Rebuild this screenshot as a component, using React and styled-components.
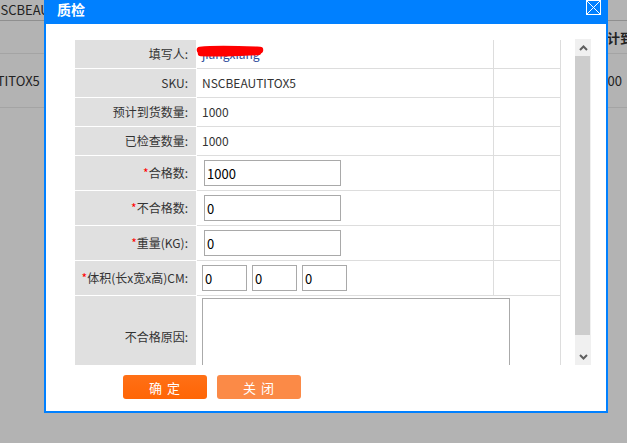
import React from 'react'
import styled, { createGlobalStyle } from 'styled-components'

const GlobalStyle = createGlobalStyle`
  html, body {
    margin: 0;
    padding: 0;
  }
  body {
    background: #b3b3b3;
    font-family: "Noto Sans CJK SC", "Noto Sans", sans-serif;
  }
`

const Page = styled.div`
  position: relative;
  width: 627px;
  height: 443px;
  overflow: hidden;
  background: #b3b3b3;
`

// page behind the dialog
const BgRow = styled.div`
  display: flex;
  justify-content: space-between;
  align-items: ${(p) => p.$align || 'center'};
  height: ${(p) => p.$h}px;
  border-bottom: 1px solid ${(p) => p.$line || '#a4a4a4'};
  font-size: 13px;
  color: #222;
  white-space: nowrap;
`

const BgCell = styled.div`
  margin-left: ${(p) => p.$shift || 0}px;
  font-weight: ${(p) => (p.$bold ? 700 : 400)};
`

const BgRight = styled.div`
  width: ${(p) => p.$w}px;
  overflow: hidden;
  font-weight: ${(p) => (p.$bold ? 700 : 400)};
`

const BgHead = styled.span`
  display: inline-block;
  margin-left: 1px;
`

// dialog
const Modal = styled.div`
  position: absolute;
  left: 44px;
  top: 0;
  width: 564px;
  height: 413px;
  box-sizing: border-box;
  background: #0080ff;
  padding: 0 2px 2px;
  display: flex;
  flex-direction: column;
`

const TitleBar = styled.div`
  height: 24px;
  display: flex;
  justify-content: space-between;
  align-items: flex-start;
  padding: 0 5px 0 11px;
  color: #fff;
`

const Title = styled.div`
  font-size: 14px;
  font-weight: 700;
  line-height: 18px;
`

const CloseBox = styled.div`
  width: 15px;
  height: 15px;
  box-sizing: border-box;
  border: 1px solid #fff;
  display: flex;
`

const Body = styled.div`
  flex: 1;
  background: #fff;
  padding: 15px 0 0 29px;
  display: flex;
  flex-direction: column;
`

const ScrollArea = styled.div`
  display: flex;
  gap: 14px;
  height: 326px;
`

const Viewport = styled.div`
  width: 486px;
  height: 326px;
  overflow: hidden;
  padding-top: 1px;
  box-sizing: border-box;
`

const Row = styled.div`
  display: grid;
  grid-template-columns: ${(p) => (p.$wide ? '122px 364px' : '122px 297px 67px')};
  height: ${(p) => p.$h}px;
`

const Label = styled.div`
  background: #e0e0e0;
  border-right: 1px solid #fff;
  border-bottom: 1px solid #fff;
  display: flex;
  align-items: center;
  justify-content: flex-end;
  padding: 0 8px 2px 0;
  font-size: 12px;
  color: #333;
  white-space: nowrap;
`

const Star = styled.span`
  color: #f00;
`

const Value = styled.div`
  position: relative;
  border-right: 1px solid #ddd;
  border-bottom: 1px solid #ddd;
  display: flex;
  align-items: ${(p) => (p.$top ? 'flex-start' : 'center')};
  gap: 5px;
  padding: 0 0 ${(p) => (p.$text ? 2 : 0)}px 5px;
  font-size: 12px;
  color: ${(p) => p.$color || '#333'};
`

const Spare = styled.div`
  border-right: 1px solid #ddd;
  border-bottom: 1px solid #ddd;
`

const Field = styled.input`
  width: ${(p) => p.$w}px;
  height: 26px;
  box-sizing: border-box;
  margin: 0 0 0 ${(p) => p.$ml || 0}px;
  border: 1px solid #a9a9a9;
  padding: 0 2px;
  font-family: "Noto Sans CJK SC", "Noto Sans", sans-serif;
  font-size: 13px;
  color: #000;
  background: #fff;
  outline: none;
`

const Reason = styled.textarea`
  width: 308px;
  height: 80px;
  box-sizing: border-box;
  margin-top: 2px;
  border: 1px solid #aaa;
  resize: none;
  outline: none;
`

const Scribble = styled.svg`
  position: absolute;
  left: -2px;
  top: 5px;
`

const ScrollBar = styled.div`
  width: 16px;
  height: 326px;
  background: #f0f0f0;
  display: flex;
  flex-direction: column;
`

const ArrowBtn = styled.div`
  height: 17px;
  display: flex;
  align-items: center;
  justify-content: center;
`

const Thumb = styled.div`
  height: 279px;
  width: 15px;
  background: #cdcdcd;
`

const Filler = styled.div`
  flex: 1;
`

const Buttons = styled.div`
  display: flex;
  gap: 10px;
  margin-top: 10px;
  padding-left: 48px;
`

const Btn = styled.button`
  width: 84px;
  height: 24px;
  border: none;
  border-radius: 3px;
  background: ${(p) => (p.$light ? '#fb8a47' : 'linear-gradient(#ff7016, #ff6505)')};
  color: #fff;
  font-family: "Noto Sans CJK SC", sans-serif;
  font-size: 13px;
  letter-spacing: 1px;
  padding: 0;
`

const Chevron = ({ up }) => (
  <svg width="9" height="6" viewBox="0 0 9 6">
    <path
      d={up ? 'M1 5 L4.5 1.5 L8 5' : 'M1 1 L4.5 4.5 L8 1'}
      fill="none"
      stroke="#606060"
      strokeWidth="2"
    />
  </svg>
)

const rows = [
  { label: '填写人:', text: 'jiangxiang', redacted: true },
  { label: 'SKU:', text: 'NSCBEAUTITOX5' },
  { label: '预计到货数量:', text: '1000' },
  { label: '已检查数量:', text: '1000' },
]

const inputs = [
  { label: '合格数:', value: '1000' },
  { label: '不合格数:', value: '0' },
  { label: '重量(KG):', value: '0' },
]

const App = () => {
  return (
    <Page>
      <GlobalStyle />
      <BgRow $h={20} $line="#8f8f8f" $align="flex-start">
        <BgCell $shift={-9}>NSCBEAUTITOX5</BgCell>
      </BgRow>
      <BgRow $h={32}>
        <BgCell />
        <BgRight $w={34} $bold>
          <BgHead>预计到货数量</BgHead>
        </BgRight>
      </BgRow>
      <BgRow $h={53}>
        <BgCell $shift={-62}>NSCBEAUTITOX5</BgCell>
        <BgRight $w={34}>1000</BgRight>
      </BgRow>

      <Modal>
        <TitleBar>
          <Title>质检</Title>
          <CloseBox>
            <svg width="13" height="13" viewBox="0 0 13 13">
              <path d="M0 0 L13 13 M13 0 L0 13" stroke="#fff" strokeWidth="1" />
            </svg>
          </CloseBox>
        </TitleBar>
        <Body>
          <ScrollArea>
            <Viewport>
              {rows.map((r) => (
                <Row key={r.label} $h={29}>
                  <Label>{r.label}</Label>
                  <Value $text $color={r.redacted ? '#2a4a9a' : '#333'}>
                    {r.text}
                    {r.redacted && (
                      <Scribble width="70" height="14" viewBox="0 0 70 14">
                        <path
                          d="M5 5 C22 3, 42 4, 65 5 M6 8 C24 9, 44 8, 63 7"
                          fill="none"
                          stroke="#ff0000"
                          strokeWidth="6.5"
                          strokeLinecap="round"
                        />
                      </Scribble>
                    )}
                  </Value>
                  <Spare />
                </Row>
              ))}
              {inputs.map((r) => (
                <Row key={r.label} $h={35}>
                  <Label>
                    <Star>*</Star>
                    {r.label}
                  </Label>
                  <Value>
                    <Field $w={137} $ml={2} defaultValue={r.value} />
                  </Value>
                  <Spare />
                </Row>
              ))}
              <Row $h={35}>
                <Label>
                  <Star>*</Star>体积(长x宽x高)CM:
                </Label>
                <Value>
                  <Field $w={45} defaultValue="0" />
                  <Field $w={45} defaultValue="0" />
                  <Field $w={45} defaultValue="0" />
                </Value>
                <Spare />
              </Row>
              <Row $h={84} $wide>
                <Label>不合格原因:</Label>
                <Value $top>
                  <Reason />
                </Value>
              </Row>
            </Viewport>
            <ScrollBar>
              <ArrowBtn>
                <Chevron up />
              </ArrowBtn>
              <Thumb />
              <Filler />
              <ArrowBtn>
                <Chevron />
              </ArrowBtn>
            </ScrollBar>
          </ScrollArea>
          <Buttons>
            <Btn>确 定</Btn>
            <Btn $light>关 闭</Btn>
          </Buttons>
        </Body>
      </Modal>
    </Page>
  )
}

export default App
